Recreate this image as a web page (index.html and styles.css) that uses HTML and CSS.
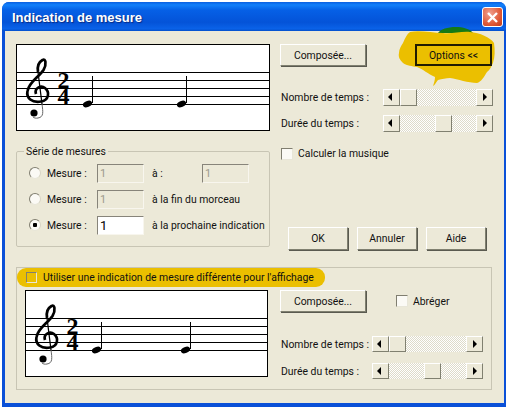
FILE: index.html
```html
<!DOCTYPE html>
<html lang="fr">
<head>
<meta charset="utf-8">
<title>Indication de mesure</title>
<link rel="stylesheet" href="styles.css">
</head>
<body>
<svg class="defs" width="0" height="0" aria-hidden="true">
  <defs>
    <symbol id="staff" viewBox="0 0 254 87" preserveAspectRatio="xMinYMin meet">
      <path stroke="#000" stroke-width="1" d="M0 28.500H254M0 36.500H254M0 44.500H254M0 52.500H254M0 60.500H254"/>
      <g fill="none" stroke="#000">
        <path stroke-width="2.700" d="M20 50 C18 44 25 41 29 44 C34 48 33 56 25 57.500 C16 59 10 54 11.500 47 C13 38 23 33 27.500 26 C31 20 29.500 14 26.500 16 C23 18 21 22 22 28"/>
        <path stroke-width="1.300" d="M22 28 L26 60"/>
        <path stroke-width="1" stroke="#666" d="M26 60 C27 68 28 73 22 74 C20 74.500 18 74 17 73"/>
      </g>
      <circle cx="18" cy="69" r="3.600"/>
      <text class="time" x="41.500" y="44">2</text>
      <text class="time" x="41.500" y="60">4</text>
    </symbol>
    <g id="note">
      <ellipse cx="-4.500" cy="0" rx="4.800" ry="3" transform="rotate(-22 -4.500 0)"/>
      <path d="M.5 -28V-1" stroke="#000"/>
    </g>
  </defs>
</svg>
<main class="window">
  <header class="titlebar">
    <h1 class="title">Indication de mesure</h1>
    <button class="close" aria-label="Fermer"><svg width="13" height="13" viewBox="0 0 13 13"><path d="M2 2L11 11M11 2L2 11" stroke="#fff" stroke-width="2.400"/></svg></button>
  </header>
  <div class="client">
    <section class="upper">
      <div class="upper-left">
        <svg class="score"><use href="#staff" x="-1" y="-1" width="254" height="87"/><use href="#note" x="75" y="59"/><use href="#note" x="169" y="59"/></svg>
        <fieldset class="series">
          <legend>Série de mesures</legend>
          <div class="series-row">
            <label class="radio-label"><span class="radio"></span>Mesure :</label>
            <input class="field" value="1" disabled>
            <span class="series-text series-text-short">à :</span>
            <input class="field" value="1" disabled>
          </div>
          <div class="series-row">
            <label class="radio-label"><span class="radio"></span>Mesure :</label>
            <input class="field" value="1" disabled>
            <span class="series-text">à la fin du morceau</span>
          </div>
          <div class="series-row">
            <label class="radio-label"><span class="radio radio-on"></span>Mesure :</label>
            <input class="field field-on" value="1">
            <span class="series-text">à la prochaine indication</span>
          </div>
        </fieldset>
      </div>
      <div class="upper-right">
        <div class="button-row">
          <button class="btn btn-wide">Composée...</button>
          <div class="highlight-blob">
            <svg class="blob" viewBox="395 22 105 68" width="105" height="68" aria-hidden="true">
              <path fill="#157a14" d="M438 33C442 26 466 24 473 33Z"/>
              <path fill="#ebbf00" d="M410 32C420 30 432 33 443 33C452 34 462 31 470 32C480 33 490 37 494 43C495 50 495 57 493 63C491 67 490 70 487 72C484 77 481 82 477 83C468 83 458 79 450 78C446 78 442 79 438 80C436 82 435 85 433 86C434 83 435 80 435 77C428 74 423 69 417 67C412 66 407 66 403 63C400 60 398 57 399 53C399 49 401 46 403 43C405 38 407 34 410 32Z"/>
            </svg>
            <button class="btn btn-options">Options &lt;&lt;</button>
          </div>
        </div>
        <div class="slider-row slider-first">
          <span class="slider-label">Nombre de temps :</span>
          <div class="scrollbar"><span class="arrow arrow-l"></span><span class="track"><span class="thumb thumb-low"></span></span><span class="arrow arrow-r"></span></div>
        </div>
        <div class="slider-row slider-next">
          <span class="slider-label">Durée du temps :</span>
          <div class="scrollbar"><span class="arrow arrow-l"></span><span class="track"><span class="thumb thumb-high"></span></span><span class="arrow arrow-r"></span></div>
        </div>
        <label class="check-label check-music"><span class="check"></span>Calculer la musique</label>
        <div class="actions">
          <button class="btn btn-action">OK</button>
          <button class="btn btn-action">Annuler</button>
          <button class="btn btn-action">Aide</button>
        </div>
      </div>
    </section>
    <section class="lower">
      <label class="check-label display-check"><span class="check check-yellow"></span>Utiliser une indication de mesure différente pour l'affichage</label>
      <div class="lower-body">
        <svg class="score score-small"><use href="#staff" x="-1" y="-1" width="254" height="87"/><use href="#note" x="75" y="59"/><use href="#note" x="164" y="59"/></svg>
        <div class="lower-right">
          <div class="button-row lower-buttons">
            <button class="btn btn-wide">Composée...</button>
            <label class="check-label check-short"><span class="check"></span>Abréger</label>
          </div>
          <div class="slider-row slider-lower-first">
            <span class="slider-label">Nombre de temps :</span>
            <div class="scrollbar"><span class="arrow arrow-l"></span><span class="track"><span class="thumb thumb-low"></span></span><span class="arrow arrow-r"></span></div>
          </div>
          <div class="slider-row slider-lower-next">
            <span class="slider-label">Durée du temps :</span>
            <div class="scrollbar"><span class="arrow arrow-l"></span><span class="track"><span class="thumb thumb-high"></span></span><span class="arrow arrow-r"></span></div>
          </div>
        </div>
      </div>
    </section>
  </div>
</main>
</body>
</html>
```

FILE: styles.css
```css
* { box-sizing: border-box; }
html, body { margin: 0; background: #fff; }
body { width: 509px; height: 409px; padding: 2px 0 0 2px; overflow: hidden; font: 10.4px Roboto, "Liberation Sans", sans-serif; color: #111; white-space: nowrap; }
.defs { position: absolute; }
.window { width: 504px; height: 405px; display: flex; flex-direction: column; background: #0a50d8; border-radius: 7px 7px 0 0; padding: 0 2px 4px 3px; }
.titlebar { height: 29px; flex: none; margin: 0 -2px 0 -3px; padding: 1px 3px 0 10px; display: flex; align-items: center; justify-content: space-between; border-radius: 7px 7px 0 0; background: linear-gradient(180deg, #0a5fe0 0%, #1280fa 10%, #0660e6 28%, #0453d8 70%, #0a62e8 92%, #0450cc 100%); }
.title { margin: 0; font: bold 13px "Liberation Sans", sans-serif; color: #fff; text-shadow: 1px 1px 1px #0a2a80; }
.close { width: 21px; height: 20px; padding: 0; display: flex; align-items: center; justify-content: center; border: 1px solid #fff; border-radius: 3px; background: radial-gradient(circle at 35% 30%, #f0a090, #e05a38 60%, #c03a18); }
.client { flex: 1; background: #ece9d8; padding: 13px 11px 0; display: flex; flex-direction: column; }
.upper { display: flex; gap: 10px; height: 223px; flex: none; }
.upper-left { width: 254px; flex: none; }
.upper-right { flex: 1; display: flex; flex-direction: column; }
.score { display: block; width: 254px; height: 87px; background: #fff; border: 1px solid #000; overflow: hidden; }
.time { font: bold 24px "Liberation Serif", serif; fill: #000; }
.series { margin: 14px 0 0; height: 102px; padding: 2px 0 0 12px; border: 1px solid #c8c5b4; border-radius: 2px; }
.series legend { padding: 0 2px; margin-left: -5px; line-height: 13px; }
.series-row { display: flex; align-items: center; height: 26px; }
.radio-label { display: flex; align-items: center; gap: 6px; width: 68px; flex: none; }
.radio { width: 12px; height: 12px; border-radius: 50%; background: #fbfaf5; border: 1px solid; border-color: #807e70 #d8d5c5 #e8e6d8 #807e70; display: block; }
.radio-on { background: radial-gradient(circle, #000 0 2px, #fbfaf5 2.500px); }
.field { width: 47px; height: 19px; flex: none; font: inherit; font-size: 11px; padding: 0 2px; border: 1px solid; border-color: #87847a #f8f6ee #f8f6ee #87847a; background: #ece9d8; color: #9c9a8c; }
.field-on { background: #fff; color: #000; font-size: 13px; }
.series-text { margin-left: 8px; }
.series-text-short { width: 50px; flex: none; }
.button-row { display: flex; justify-content: space-between; align-items: flex-start; height: 22px; padding-right: 1px; }
.btn { font: inherit; height: 22px; padding: 0; color: #111; background: #ece9d8; border: 1px solid; border-color: #fff #808070 #808070 #fff; box-shadow: 1px 1px 0 #5a5a50; }
.btn-wide { width: 86px; }
.highlight-blob { position: relative; }
.blob { position: absolute; left: -20px; top: -22px; }
.btn-options { position: relative; display: block; width: 77px; background: #ebbf00; border: 2px solid #201c00; box-shadow: none; }
.slider-row { display: flex; align-items: center; justify-content: space-between; padding-left: 1px; }
.slider-first { margin-top: 23px; }
.slider-next { margin-top: 9px; }
.scrollbar { width: 110px; height: 17px; display: flex; flex: none; }
.arrow { width: 17px; height: 100%; flex: none; position: relative; background: #ece9d8; border: 1px solid; border-color: #fff #808070 #808070 #fff; }
.arrow::after { content: ""; position: absolute; top: 3px; border: 4px solid transparent; }
.arrow-l::after { left: 0; border-right-color: #000; }
.arrow-r::after { left: 6px; border-left-color: #000; }
.track { flex: 1; position: relative; background: repeating-conic-gradient(#dedbca 0 25%, #fff 0 50%) 0 0 / 2px 2px; }
.thumb { position: absolute; top: 0; width: 17px; height: 100%; background: #ece9d8; border: 1px solid; border-color: #fff #808070 #808070 #fff; }
.thumb-low { left: 0; }
.thumb-high { left: 35px; }
.check-label { display: flex; align-items: center; gap: 5px; }
.check { width: 12px; height: 12px; flex: none; background: #fbfaf5; border: 1px solid; border-color: #807e70 #e8e6d8 #e8e6d8 #807e70; }
.check-music { margin-top: 15px; padding-left: 1px; }
.actions { display: flex; gap: 9px; margin-top: 67px; margin-left: 8px; }
.btn-action { width: 60px; height: 23px; }
.lower { flex: none; width: 476px; height: 123px; border: 1px solid #c8c5b4; padding: 22px 0 0 8px; position: relative; }
.display-check { position: absolute; left: 0; top: 0; width: 308px; height: 19px; padding-left: 9px; gap: 6px; background: #ebbf00; border-radius: 9px; }
.check-yellow { width: 11px; height: 11px; background: #ebbf00; }
.lower-body { display: flex; gap: 12px; }
.score-small { width: 243px; flex: none; }
.lower-right { width: 203px; }
.lower-buttons { justify-content: flex-start; gap: 30px; padding: 0; }
.check-short { height: 22px; }
.slider-lower-first { margin-top: 24px; }
.slider-lower-next { margin-top: 11px; }
.lower-right .scrollbar { width: 111px; height: 16px; }
```
